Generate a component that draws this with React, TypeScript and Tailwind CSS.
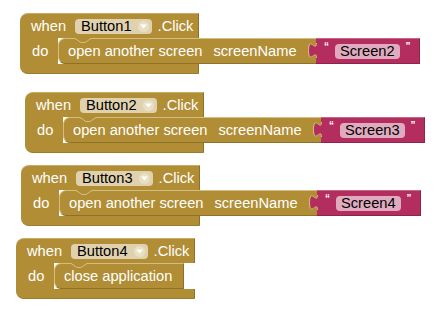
import React from "react";

function Arrow() {
  return (
    <span className="ml-[6px] flex h-[11px] w-[11px] items-center justify-center rounded-full bg-[#e9dfc4]">
      <svg width="7" height="5" viewBox="0 0 7 5">
        <path d="M0 0.5 L7 0.5 L3.5 4.5 Z" fill="#ffffff" />
      </svg>
    </span>
  );
}

function Notch() {
  return (
    <svg
      className="absolute left-[16px] top-[-1px]"
      width="16"
      height="6"
      viewBox="0 0 16 6"
    >
      <path d="M0 0 L16 0 L10 4.5 L6 4.5 Z" fill="#b18e35" />
      <path d="M0 0.5 L6 4.5 L10 4.5 L16 0.5" fill="none" stroke="#d4bd80" strokeWidth="1" />
    </svg>
  );
}

function StringBlock({ value }: { value: string }) {
  return (
    <div className="relative flex h-full w-[104px] items-center border-t border-b border-r border-t-[#c8668a] border-b-[#8f2449] border-r-[#8f2449] bg-[#b32d5e] pl-[8px]">
      <svg
        className="absolute left-[-8px] top-[-1px]"
        width="9"
        height="26"
        viewBox="0 0 9 26"
      >
        <path d="M9 5 C9 15 1 -3 1 12.5 C1 28 9 10 9 20 Z" fill="#b32d5e" />
        <path d="M8.5 5 C8.5 15 0.5 -3 0.5 12.5 C0.5 28 8.5 10 8.5 20" fill="none" stroke="#d4bd80" strokeWidth="1" />
      </svg>
      <span className="mt-[-8px] text-[10px] font-bold leading-none text-white">“</span>
      <span className="ml-[6px] flex h-[15px] items-center rounded-[4px] bg-[#e1abbf] px-[5px] leading-none text-black">
        {value}
      </span>
      <span className="ml-[6px] mt-[-8px] text-[10px] font-bold leading-none text-white">”</span>
    </div>
  );
}

function EventBlock({
  btn,
  className,
  children,
}: {
  btn: string;
  className: string;
  children: React.ReactNode;
}) {
  return (
    <div className={"flex w-max flex-col " + className}>
      <div className="flex h-[25px] w-[179px] items-center rounded-tl-[8px] border-t border-r border-t-[#c9ad66] border-r-[#8d7128] bg-[#b18e35] pl-[11px]">
        <span className="text-white">when</span>
        <span className="ml-[9px] flex h-[15px] items-center rounded-[4px] bg-[#e0d2ae] pl-[6px] pr-[3px] leading-none text-black">
          {btn}
          <Arrow />
        </span>
        <span className="ml-[6px] text-white">.Click</span>
      </div>
      <div className="flex h-[26px]">
        <div className="flex w-[38px] items-center bg-[#b18e35] pl-[12px] text-white">do</div>
        {children}
      </div>
      <div className="h-[10px] w-[179px] rounded-bl-[8px] border-r border-b border-r-[#8d7128] border-b-[#9a7c2e] bg-[#b18e35]" />
    </div>
  );
}

function OpenScreen({ screen }: { screen: string }) {
  return (
    <div className="flex h-full items-center">
      <div className="relative flex h-full w-[258px] items-center rounded-l-[7px] border-l border-t border-b border-l-[#d4bd80] border-t-[#d4bd80] border-b-[#8d7128] bg-[#b18e35] pl-[9px] text-white">
        <Notch />
        <span>open another screen</span>
        <span className="ml-[11px]">screenName</span>
      </div>
      <StringBlock value={screen} />
    </div>
  );
}

function CloseApp() {
  return (
    <div className="relative flex h-full w-[130px] items-center rounded-l-[7px] border-l border-t border-b border-r border-l-[#d4bd80] border-t-[#d4bd80] border-b-[#8d7128] border-r-[#8d7128] bg-[#b18e35] pl-[9px] text-white">
      <Notch />
      <span>close application</span>
    </div>
  );
}

export default function App() {
  return (
    <div className="h-[312px] w-[437px] bg-white pt-[13px] font-['Liberation_Sans',Arial,sans-serif] text-[14.67px] leading-none">
      <EventBlock btn="Button1" className="ml-[20px]">
        <OpenScreen screen="Screen2" />
      </EventBlock>
      <EventBlock btn="Button2" className="ml-[25px] mt-[18px]">
        <OpenScreen screen="Screen3" />
      </EventBlock>
      <EventBlock btn="Button3" className="ml-[21px] mt-[12px]">
        <OpenScreen screen="Screen4" />
      </EventBlock>
      <EventBlock btn="Button4" className="ml-[16px] mt-[12px]">
        <CloseApp />
      </EventBlock>
    </div>
  );
}
